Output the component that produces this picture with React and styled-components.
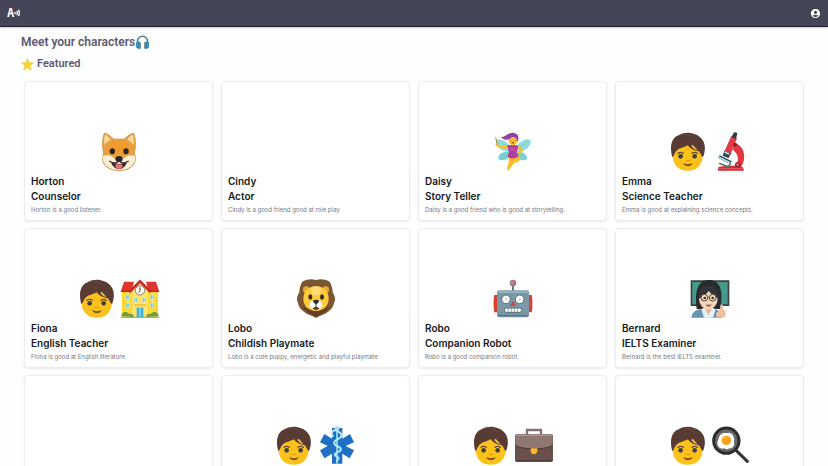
import React from "react";
import styled, { createGlobalStyle } from "styled-components";
import { MdAccountCircle } from "react-icons/md";

/* Emoji */
const Dog = () => (
  <Emoji viewBox="0 0 120 120" aria-hidden="true">
    <path d="M14 64C8 42 10 14 17 3c9 2 21 12 27 18h32C82 15 94 5 103 3c7 11 9 39 3 61 6 14 4 26-4 36-10 11-24 16-42 16s-32-5-42-16c-8-10-10-22-4-36z" fill="#e8a045" stroke="#c98a45" strokeWidth="2" />
    <path d="M16 38c-1-14 0-24 3-30 7 3 12 9 16 15-8 3-14 9-19 15zM104 38c1-14 0-24-3-30-7 3-12 9-16 15 8 3 14 9 19 15z" fill="#f9dd9f" />
    <path d="M44 22h32c6 10 14 16 20 26 3 10-10 22-36 22S22 58 24 48c6-10 14-16 20-26z" fill="#ee9c2e" />
    <path d="M12 72c12-4 26-2 34 8l14-4 14 4c8-10 22-12 34-8 3 10-1 20-10 29-10 9-22 13-38 13s-28-4-38-13C13 92 9 82 12 72z" fill="#fdf0d8" />
    <ellipse cx="40" cy="58" rx="8" ry="9" fill="#2c2321" />
    <ellipse cx="81" cy="58" rx="8" ry="9" fill="#2c2321" />
    <path d="M36 90c14 7 34 7 48 0-3 13-13 21-24 21S39 103 36 90z" fill="#3a2a29" />
    <path d="M49 102c2-7 6-5 11-5s9-2 11 5c0 5-6 9-11 9s-11-4-11-9z" fill="#ef6f77" />
    <path d="M31 87c12 8 23 7 29-1 6 8 17 9 29 1" fill="none" stroke="#3a2a29" strokeWidth="4" />
    <ellipse cx="60" cy="81" rx="11" ry="9" fill="#262626" />
  </Emoji>
);

const Person = () => (
  <Emoji viewBox="0 0 120 120" aria-hidden="true">
    <path d="M14 56c0-24 18-40 45-40s45 16 45 40v16c0 27-18 44-45 44S14 99 14 72z" fill="#fcc21b" />
    <path d="M13 76C4 44 10 16 34 9 52-3 88 2 102 22c12 16 10 36 3 54-6-5-8-12-12-18-16-2-26-8-34-18-14 8-27 8-35 18-5 7-6 13-11 18z" fill="#583c34" />
    <path d="M34 9c14-5 34-3 44 10" fill="none" stroke="#74534a" strokeWidth="2" />
    <path d="M74 38l15 17c-7-1-14-6-19-13z" fill="#f4c153" />
    <path d="M30 64q8-6 16 0M72 64q8-6 16 0" fill="none" stroke="#6d4434" strokeWidth="4" strokeLinecap="round" />
    <circle cx="38" cy="73" r="7" fill="#404040" />
    <circle cx="80" cy="73" r="7" fill="#404040" />
    <path d="M55 84q5 4 10 0" fill="none" stroke="#e59600" strokeWidth="4" />
    <path d="M45 94q14 5 29 0-4 9-14 9t-15-9z" fill="#80562f" />
  </Emoji>
);

const Fairy = () => (
  <Emoji viewBox="0 0 120 120" aria-hidden="true">
    <path d="M54 46C40 26 20 18 10 24c-6 16 12 34 40 36zM68 46c14-20 34-28 44-22 6 14-12 34-40 36z" fill="#8bdde3" />
    <path d="M50 60C30 56 16 66 16 80c8 10 32 4 40-14zM70 60c18-4 32 6 32 20-8 10-32 4-40-14z" fill="#72d3dd" />
    <path d="M18 28l30 20M106 28L76 48M22 78l28-14M96 78L72 64" stroke="#c0b86a" strokeWidth="2" />
    <path d="M8 16l6 26" stroke="#b88b35" strokeWidth="3" />
    <path d="M10 34c8 8 18 8 34 8l4 8c-20 2-32-2-42-10zM78 42l14 14-14 10-5-5 9-6-10-8z" fill="#fbc02d" />
    <path d="M44 70h34c8 10 4 20-14 22L50 112l-8 4 2-16 4-12z" fill="#fbc02d" />
    <path d="M50 70l26 4-20 16z" fill="#f6a82b" />
    <path d="M42 41c6-3 28-3 34 0l-5 20 6 12c-10 8-26 8-34 0l5-12z" fill="#ac3fa3" />
    <path d="M51 47h16v10H51z" fill="#c64f9e" />
    <ellipse cx="60" cy="23" rx="14" ry="17" fill="#fbc02d" />
    <path d="M24 14c10 4 18-10 34-12 16 0 22 12 16 28C72 20 66 14 58 15 46 26 30 26 24 14z" fill="#9241a6" />
    <path d="M52 25h2M65 25h2M56 32q4 2 7 0" stroke="#67412e" strokeWidth="3" />
  </Emoji>
);

const Microscope = () => (
  <Emoji viewBox="0 0 120 120" aria-hidden="true">
    <path d="M68 32c34 6 42 52 18 78H66c20-18 20-40 0-56z" fill="#df3840" />
    <path d="M22 106c18-6 58-6 74 0l3 10H20z" fill="#ca2e36" />
    <path d="M22 110h74" stroke="#ef5960" strokeWidth="3" />
    <path d="M61 12l17 7-20 50-19-8z" fill="#e33b42" />
    <path d="M68 2q6-4 11 2l-4 17-13-6z" fill="#303c43" />
    <path d="M40 56l19 8-6 15-18-8z" fill="#344850" />
    <path d="M41 60l13 6" stroke="#bedbe3" strokeWidth="5" />
    <path d="M24 74l36 18" stroke="#24424c" strokeWidth="9" />
    <path d="M24 76l33 16" stroke="#b3e3ec" strokeWidth="5" />
    <path d="M24 94l28 10 6-8" fill="none" stroke="#56737d" strokeWidth="5" />
    <circle cx="72" cy="38" r="6" fill="#8e1d2b" />
    <circle cx="80" cy="98" r="8" fill="#8e1d2b" />
    <circle cx="80" cy="98" r="4" fill="#ec6c70" />
  </Emoji>
);

const School = () => (
  <Emoji viewBox="0 0 120 120" aria-hidden="true">
    <path d="M6 34h108v80H6z" fill="#fdd835" />
    <path d="M36 34L60 12l24 22v80H36z" fill="#ffe36b" />
    <path d="M12 8h30l-8 30H2zM78 8h30l10 30H86z" fill="#df352f" />
    <path d="M28 39L60 7l32 32" fill="none" stroke="#ce2929" strokeWidth="8" />
    <path d="M3 37h30M87 37h30" stroke="#b81e24" strokeWidth="3" />
    <circle cx="60" cy="34" r="14" fill="#fff" stroke="#8f8067" strokeWidth="3" />
    <path d="M60 25v10l-4 5" fill="none" stroke="#333" strokeWidth="3" />
    <path d="M18 47h11v15H18zM91 47h11v15H91zM18 72h11v15H18zM91 72h11v15H91zM42 56h10v14H42zM68 56h10v14H68z" fill="#62c3d3" stroke="#fff3ab" strokeWidth="2" />
    <path d="M24 47v40M97 47v40M47 56v14M73 56v14" stroke="#e3f8f9" strokeWidth="2" />
    <path d="M42 78h36" stroke="#eda81a" strokeWidth="3" />
    <path d="M50 86h20v29H50z" fill="#3bb1dd" />
    <path d="M60 86v29" stroke="#fff" strokeWidth="2" />
    <path d="M4 112c0-14 16-18 24-6 6-5 14 0 14 8zM116 112c0-14-16-18-24-6-6-5-14 0-14 8z" fill="#6a9f42" />
    <path d="M2 115h116" stroke="#a2957f" strokeWidth="3" />
  </Emoji>
);

const Lion = () => (
  <Emoji viewBox="0 0 120 120" aria-hidden="true">
    <path d="M60 3c14-4 30-2 42 6 6 12 8 22 8 31 8 12 9 23 4 32-2 12-8 20-18 26-8 8-20 10-36 18-16-8-28-10-36-18C14 92 8 84 6 72 1 63 2 52 10 40c0-9 2-19 8-31C30 1 46-1 60 3z" fill="#7d5732" />
    <path d="M20 84c10 16 24 20 40 32 16-12 30-16 40-32l-16 4H36z" fill="#634026" />
    <circle cx="31" cy="32" r="10" fill="#e5ad38" />
    <circle cx="89" cy="32" r="10" fill="#e5ad38" />
    <path d="M60 22c23 0 38 15 38 38 0 21-16 36-38 36S22 81 22 60c0-23 15-38 38-38z" fill="#fdc93d" />
    <path d="M43 26q17-8 34 0l-8 22H51z" fill="#ffdc73" />
    <ellipse cx="43" cy="54" rx="6" ry="8" fill="#352c26" />
    <ellipse cx="78" cy="54" rx="6" ry="8" fill="#352c26" />
    <path d="M41 78c0-9 9-14 19-14s19 5 19 14-7 12-15 11l-4 4-4-4c-8 1-15-2-15-11z" fill="#fff" />
    <path d="M50 65q10-5 20 0-3 9-10 11-7-2-10-11z" fill="#312f2d" />
    <path d="M60 74v11M52 88q8-7 16 0-8 7-16 0z" stroke="#4d3b31" strokeWidth="3" fill="#4d3b31" />
  </Emoji>
);

const Robot = () => (
  <Emoji viewBox="0 0 120 120" aria-hidden="true">
    <path d="M60 16v22" stroke="#5e7b87" strokeWidth="6" />
    <circle cx="60" cy="12" r="10" fill="#ae7278" />
    <circle cx="58" cy="10" r="5" fill="#a3959b" />
    <path d="M4 48h14v52H4c-3-8-3-44 0-52zM102 48h14c3 8 3 44 0 52h-14z" fill="#d64136" />
    <rect x="12" y="34" width="96" height="81" rx="6" fill="#7b98a6" />
    <path d="M16 39h88" stroke="#a4bfca" strokeWidth="4" />
    <path d="M16 110h88" stroke="#5c7b8a" strokeWidth="5" />
    <circle cx="39" cy="61" r="13" fill="#fff" stroke="#526e7b" strokeWidth="3" />
    <circle cx="80" cy="61" r="13" fill="#fff" stroke="#526e7b" strokeWidth="3" />
    <circle cx="39" cy="61" r="3" fill="#b7c6cc" />
    <circle cx="80" cy="61" r="3" fill="#b7c6cc" />
    <path d="M60 66l9 15H51z" fill="#d8403b" />
    <rect x="34" y="87" width="52" height="13" rx="6" fill="#fff" stroke="#526e7b" strokeWidth="3" />
    <path d="M46 87v13M55 87v13M64 87v13M73 87v13" stroke="#697b82" strokeWidth="2" />
  </Emoji>
);

const Teacher = () => (
  <Emoji viewBox="0 0 120 120" aria-hidden="true">
    <path d="M2 4h116v77H2z" fill="#3d403f" />
    <path d="M7 9h106v67H7z" fill="#459b8b" />
    <path d="M20 90C12 32 26 3 57 3s44 26 34 87z" fill="#292b2f" />
    <path d="M4 116c2-18 16-24 30-26h38c14 2 24 10 24 26z" fill="#6995b5" />
    <path d="M43 83h25v15l-13 18-12-18z" fill="#dfba96" />
    <path d="M34 90l9-4 12 23 13-23 9 5-8 25H42z" fill="#e8f1f7" />
    <ellipse cx="55" cy="59" rx="28" ry="32" fill="#f5d5b5" />
    <path d="M25 60c-2-26 9-40 30-40s34 17 31 40C74 52 62 44 56 36 49 47 36 52 25 60z" fill="#33343a" />
    <circle cx="43" cy="56" r="10" fill="#f9dfc3" stroke="#4a4142" strokeWidth="3" />
    <circle cx="68" cy="56" r="10" fill="#f9dfc3" stroke="#4a4142" strokeWidth="3" />
    <path d="M53 55h5" stroke="#4a4142" strokeWidth="3" />
    <circle cx="44" cy="57" r="4" fill="#39312e" />
    <circle cx="68" cy="57" r="4" fill="#39312e" />
    <path d="M46 76q9 3 19 0-3 7-9 7t-10-7z" fill="#a34e49" />
    <path d="M85 96l6-7V78q5-5 8 1v12c8 2 9 8 7 24H80c-4-9-1-15 5-19z" fill="#efc19c" />
  </Emoji>
);

const Medical = () => (
  <Emoji viewBox="0 0 120 120" aria-hidden="true">
    <path d="M45 6h31v32l23-14 12 25-25 11 25 13-13 24-22-14v30H45V83L22 97 9 73l23-13L9 49l13-25 23 14z" fill="#1f70c4" />
    <path d="M60 8v104" stroke="#82cbe9" strokeWidth="6" strokeLinecap="round" />
    <circle cx="60" cy="8" r="7" fill="#a9e2f5" />
    <path d="M48 30c-10-8 2-22 12-15 18 8 18 18 0 26-13 7-10 15 2 20 13 5 13 13-2 18-9 4-9 9 0 13 7 4 5 8 0 12" fill="none" stroke="#b5e8f7" strokeWidth="6" strokeLinecap="round" />
  </Emoji>
);

const Briefcase = () => (
  <Emoji viewBox="0 0 120 120" aria-hidden="true">
    <path d="M39 27V12h42v15" fill="none" stroke="#7d7374" strokeWidth="7" />
    <rect x="3" y="25" width="114" height="83" rx="6" fill="#6a504d" />
    <path d="M4 29q0-4 5-4h102q5 0 5 4v29C98 72 22 72 4 58z" fill="#8f7772" />
    <path d="M7 28h106" stroke="#ae9995" strokeWidth="4" />
    <path d="M4 58c18 14 94 14 112 0M5 104h110" fill="none" stroke="#4e3735" strokeWidth="3" />
    <path d="M50 67h20v10l-5 7H55l-5-7z" fill="#fbb827" />
  </Emoji>
);

const Cooking = () => (
  <Emoji viewBox="0 0 120 120" aria-hidden="true">
    <path d="M76 74l33 32" stroke="#343434" strokeWidth="9" strokeLinecap="round" />
    <circle cx="46" cy="44" r="38" fill="#68696a" stroke="#2d2d2e" strokeWidth="9" />
    <path d="M20 57c-3-9 2-15 4-23 4-12 14-14 22-12 8-5 19 1 21 9 4 6 3 12 2 18 3 11-6 20-14 18-6 5-12 2-17 0-8 3-16-2-18-10z" fill="#fff" />
    <circle cx="46" cy="43" r="14" fill="#f7a019" />
    <path d="M37 39q3-6 10-6" fill="none" stroke="#ffd16a" strokeWidth="3" />
  </Emoji>
);

const Headphones = () => (
  <SmallEmoji viewBox="0 0 48 48" aria-hidden="true">
    <path d="M8 30V20a16 16 0 0 1 32 0v10" fill="none" stroke="#537b91" strokeWidth="5" />
    <path d="M3 27q0-6 7-6h4v23H9q-6-3-6-10zM45 27q0-6-7-6h-4v23h5q6-3 6-10z" fill="#2684b0" />
    <path d="M14 23h4v21h-4zM30 23h4v21h-4z" fill="#354f5d" />
    <path d="M7 26v12M41 26v12" stroke="#57b5d6" strokeWidth="3" />
  </SmallEmoji>
);

const Star = () => (
  <SmallEmoji $size={13} viewBox="0 0 48 48" aria-hidden="true">
    <path d="M24 2l6 15 16 1-12 11 4 16-14-9-14 9 4-16L2 18l16-1z" fill="#f6d43b" stroke="#efc62f" strokeWidth="2" strokeLinejoin="round" />
  </SmallEmoji>
);

const characters = [
  { id: 1, name: "Horton", role: "Counselor", text: "Horton is a good listener.", icons: [Dog] },
  { id: 2, name: "Cindy", role: "Actor", text: "Cindy is a good friend good at role play.", icons: [] },
  { id: 3, name: "Daisy", role: "Story Teller", text: "Daisy is a good friend who is good at storytelling.", icons: [Fairy] },
  { id: 4, name: "Emma", role: "Science Teacher", text: "Emma is good at explaining science concepts.", icons: [Person, Microscope] },
  { id: 5, name: "Fiona", role: "English Teacher", text: "Fiona is good at English literature.", icons: [Person, School] },
  { id: 6, name: "Lobo", role: "Childish Playmate", text: "Lobo is a cute puppy, energetic and playful playmate", icons: [Lion] },
  { id: 7, name: "Robo", role: "Companion Robot", text: "Robo is a good companion robot.", icons: [Robot] },
  { id: 8, name: "Bernard", role: "IELTS Examiner", text: "Bernard is the best IELTS examiner.", icons: [Teacher] },
  { id: 9, icons: [] },
  { id: 10, icons: [Person, Medical] },
  { id: 11, icons: [Person, Briefcase] },
  { id: 12, icons: [Person, Cooking] },
];

const Card = ({ item }) => (
  <CardBox href={"#character-" + item.id}>
    <Art>
      {item.icons.map((Icon, i) => (
        <Icon key={i} />
      ))}
    </Art>
    {item.name && (
      <>
        <Name>{item.name}</Name>
        <Name>{item.role}</Name>
        <Desc>{item.text}</Desc>
      </>
    )}
  </CardBox>
);

const App = () => {
  return (
    <React.Fragment>
      <GlobalStyle />
      <Header>
        <Logo href="#home">
          A
          <svg viewBox="0 0 18 24" aria-hidden="true">
            <path d="M3 10v4M9 7q2 5 0 10M14 4q4 8 0 16" />
          </svg>
        </Logo>
        <AccountBtn type="button" aria-label="Account">
          <MdAccountCircle />
        </AccountBtn>
      </Header>
      <Main>
        <Title>
          Meet your characters
          <Headphones />
        </Title>
        <SubTitle>
          <Star />
          Featured
        </SubTitle>
        <Grid>
          {characters.map((item) => (
            <Card key={item.id} item={item} />
          ))}
        </Grid>
      </Main>
    </React.Fragment>
  );
};

const GlobalStyle = createGlobalStyle`
  * {
    box-sizing: border-box;
  }
  html {
    scrollbar-width: none;
  }
  body {
    margin: 0;
    background: #fefefe;
    font-family: Inter, "Liberation Sans", sans-serif;
  }
`;

const Header = styled.header`
  display: flex;
  align-items: center;
  justify-content: space-between;
  height: 27px;
  padding: 0 7px;
  background: #444556;
  border-bottom: 1px solid #20202f;
  box-shadow: 0 1px 2px rgba(0, 0, 0, 0.2);
`;

const Logo = styled.a`
  display: flex;
  align-items: center;
  color: #fff;
  font: bold 12px/16px "DejaVu Sans Mono", monospace;
  text-decoration: none;
  svg {
    width: 6px;
    height: 8px;
    fill: none;
    stroke: #fff;
    stroke-width: 4;
    stroke-linecap: round;
  }
`;

const AccountBtn = styled.button`
  display: flex;
  padding: 0;
  border: 0;
  background: none;
  color: #fff;
  svg {
    width: 11px;
    height: 11px;
  }
`;

const Main = styled.main`
  padding: 7px 24px 8px 21px;
`;

const Title = styled.h1`
  display: flex;
  align-items: center;
  margin: 0;
  color: #5d5872;
  font: 600 12px/16px Roboto, sans-serif;
`;

const SubTitle = styled.h2`
  display: flex;
  align-items: center;
  gap: 3px;
  margin: 6px 0 0;
  color: #5d5872;
  font: 600 11px/16px Roboto, sans-serif;
`;

const Grid = styled.section`
  display: grid;
  grid-template-columns: repeat(4, 1fr);
  gap: 7px 8px;
  margin: 9px 0 0 3px;
`;

const CardBox = styled.a`
  display: flex;
  flex-direction: column;
  min-width: 0;
  min-height: 140px;
  padding: 6px;
  border: 1px solid #ececee;
  border-radius: 4px;
  background: #fff;
  box-shadow: 0 1px 2px rgba(0, 0, 0, 0.08);
  color: #18181b;
  text-decoration: none;
`;

const Art = styled.div`
  display: flex;
  align-items: flex-end;
  justify-content: center;
  gap: 3px;
  height: 84px;
  margin-bottom: 2px;
`;

const Emoji = styled.svg`
  width: 40px;
  height: 40px;
`;

const SmallEmoji = styled.svg`
  width: ${(props) => props.$size || 15}px;
  height: ${(props) => props.$size || 15}px;
`;

const Name = styled.strong`
  font-size: 10px;
  font-weight: 600;
  line-height: 15px;
`;

const Desc = styled.span`
  margin-top: 2px;
  color: #77777d;
  font-size: 6px;
  line-height: 8px;
`;

export default App;
